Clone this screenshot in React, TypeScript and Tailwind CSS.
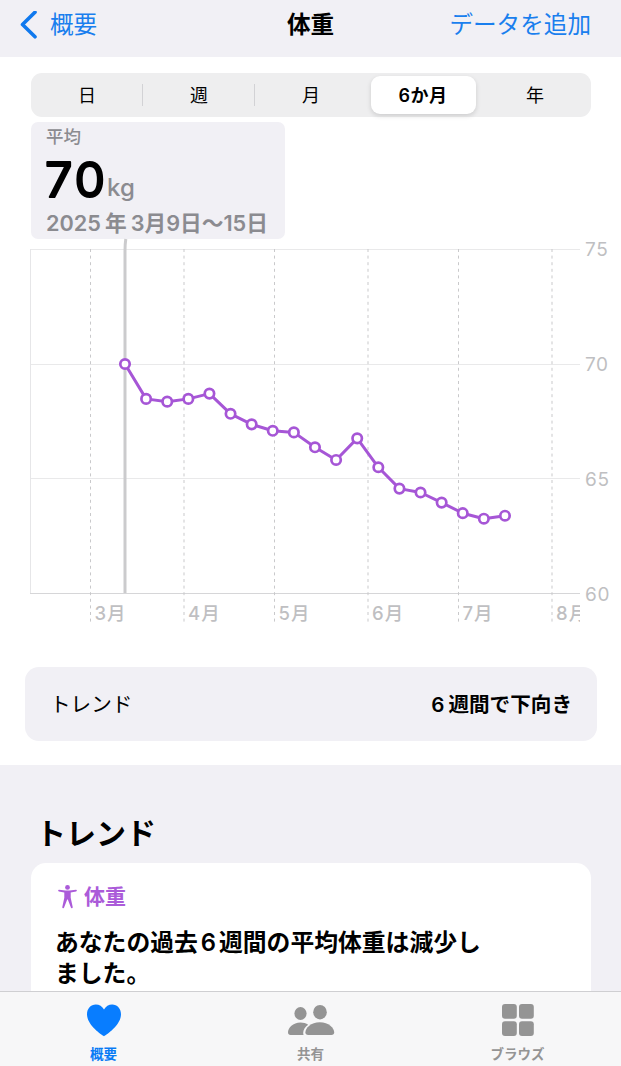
import { useState } from "react";

const PERIODS = ["日", "週", "月", "6か月", "年"];

const WEIGHTS = [
  70, 68.48, 68.36, 68.48, 68.71, 67.83, 67.37, 67.09, 67.02, 66.37, 65.82,
  66.76, 65.5, 64.57, 64.4, 63.96, 63.5, 63.26, 63.39,
];

const MONTHS = [
  { label: "3", x: 90.5 },
  { label: "4", x: 184 },
  { label: "5", x: 274.5 },
  { label: "6", x: 368 },
  { label: "7", x: 458.5 },
  { label: "8", x: 552 },
];

const toX = (i: number) => 125 + i * 21.11;
const toY = (kg: number) => 354.5 - (kg - 60) * 22.95;

function Header() {
  return (
    <header className="grid h-[57px] shrink-0 grid-cols-3 items-center bg-[#f1f0f5] pb-[7px] pl-5 pr-[30px] text-[23.6px]">
      <button className="flex items-center gap-[13px] text-[#1a7fee]">
        <svg width="17" height="28" viewBox="0 0 17 28" fill="none">
          <path
            d="M15 1.2 2.5 13.5 15 25.8"
            stroke="#1079ee"
            strokeWidth="3.6"
            strokeLinecap="round"
            strokeLinejoin="round"
          />
        </svg>
        <span>概要</span>
      </button>
      <h1 className="pl-2.5 text-center font-bold">体重</h1>
      <button className="whitespace-nowrap text-right text-[#1a7fee]">データを追加</button>
    </header>
  );
}

function PeriodTabs() {
  const [selected, setSelected] = useState(3);

  return (
    <div className="ml-[31px] mr-[30px] mt-4 flex h-[44px] items-center rounded-[11px] bg-[#eeeeef]">
      {PERIODS.map((period, i) => (
        <button
          key={period}
          onClick={() => setSelected(i)}
          className={`flex h-full flex-1 items-center justify-center ${
            i < 2 ? "bg-[linear-gradient(#d2d2d5,#d2d2d5)] bg-[length:1px_22px] bg-right bg-no-repeat" : ""
          }`}
        >
          <span
            className={`flex h-[38px] w-[105px] items-center justify-center rounded-[9px] pt-px text-[18px] ${
              i === selected
                ? "bg-white font-semibold tracking-[0.5px] shadow-[0_2px_5px_rgba(0,0,0,0.14)]"
                : ""
            }`}
          >
            {period}
          </span>
        </button>
      ))}
    </div>
  );
}

function AverageCard() {
  return (
    <div className="ml-[31px] mt-[5px] flex h-[117px] w-[254px] flex-col rounded-[7px] bg-[#f1f0f5] pl-[15px] text-[#8b8b90]">
      <p className="mt-[3px] text-[17.5px] font-medium leading-6">平均</p>
      <div className="flex h-[58px] items-end">
        <svg width="60" height="58" viewBox="0 0 60 58" className="overflow-visible">
          <text
            x="-1"
            y="48.3"
            textLength="60"
            fontSize="48.5"
            fontWeight="400"
            stroke="#000"
            strokeWidth="2"
            strokeLinejoin="round"
          >
            70
          </text>
        </svg>
        <span className="pb-[4px] pl-px text-[24px] font-medium leading-[30px]">kg</span>
      </div>
      <p className="whitespace-nowrap text-[21.7px] font-semibold leading-8">
        2025<span className="mx-1">年</span>3月9日〜15日
      </p>
    </div>
  );
}

function WeightChart() {
  const points = WEIGHTS.map((kg, i) => `${toX(i)},${toY(kg)}`).join(" ");

  return (
    <svg width="621" height="386" viewBox="0 0 621 386" className="block overflow-visible">
      <clipPath id="plot">
        <rect width="580" height="386" />
      </clipPath>
      {[75, 70, 65, 60].map((kg) => (
        <g key={kg}>
          <path
            d={`M30 ${Math.floor(toY(kg)) + 0.5}H580`}
            stroke={kg === 60 ? "#d6d6d8" : "#e9e9ea"}
          />
          <text x="585" y={toY(kg) + 7} fontSize="19" fill="#bfbfc2" letterSpacing="0.6">
            {kg}
          </text>
        </g>
      ))}
      <path d="M30.5 10V354" stroke="#e6e6e8" />
      <g clipPath="url(#plot)">
        {MONTHS.map((m) => (
          <g key={m.label}>
            <path d={`M${m.x} 10V385`} stroke="#c9c9cb" strokeDasharray="3 3.6" />
            <text x={m.x + 4} y="380.7" fontSize="18.5" fill="#bfbfc2" fontWeight="500">
              {m.label}
              <tspan dx="1">月</tspan>
            </text>
          </g>
        ))}
      </g>
      <path d="M125.8 0Q125 5 125 12V354" fill="none" stroke="#cbcbcd" strokeWidth="3" />
      <polyline points={points} fill="none" stroke="#a656d6" strokeWidth="3" strokeLinejoin="round" />
      {WEIGHTS.map((kg, i) => (
        <circle key={i} cx={toX(i)} cy={toY(kg)} r="4.7" fill="#fff" stroke="#a656d6" strokeWidth="2.7" />
      ))}
    </svg>
  );
}

function TrendSection() {
  return (
    <section className="min-h-0 flex-1 overflow-hidden bg-[#f1f0f5] px-[31px] pt-[47px]">
      <h2 className="pl-[5px] text-[30px] font-bold leading-[42px]">トレンド</h2>
      <div className="mt-[9px] h-60 w-[560px] rounded-[15px] bg-white px-[24px] pt-[19px]">
        <div className="flex h-[30px] items-center gap-[7px] pl-[3px] text-[21px] font-bold text-[#ab5bd9]">
          <svg width="19" height="24" viewBox="0 0 19 24" fill="#ab5bd9">
            <circle cx="9.5" cy="2.4" r="2.4" />
            <path d="M1 4.8 7.5 5.5h4L18 4.8a.8.8 0 0 1 .1 1.6L12.7 7.5v5.2l2 9.3a.9.9 0 0 1-1.8.5L9.8 14.5h-.6l-3.1 8a.9.9 0 0 1-1.8-.5l2-9.3V7.5L.9 6.4A.8.8 0 0 1 1 4.8Z" />
          </svg>
          体重
        </div>
        <p className="mt-4 text-[23.8px] font-semibold leading-[30.5px]">
          あなたの過去<span className="mx-[3px]">6</span>週間の平均体重は減少し
          <br />
          ました。
        </p>
      </div>
    </section>
  );
}

function TabBar() {
  return (
    <nav className="grid h-[75px] shrink-0 grid-cols-3 border-t border-[#cfcfd2] bg-[#f7f7f8] text-[13.5px] font-bold text-[#949494]">
      <button className="flex flex-col items-center text-[#087bf5]">
        <svg width="36" height="52" viewBox="0 0 36 52" fill="#087dff">
          <path d="M18 44.3C14.8 42.2 1 32.9 1 22.3 1 16.6 4.9 12.5 9.8 12.5c3.5 0 6.5 1.8 8.2 5.1 1.7-3.3 4.7-5.1 8.2-5.1 4.9 0 8.8 4.1 8.8 9.8 0 10.6-13.8 19.9-17 22Z" />
        </svg>
        <span className="leading-5">概要</span>
      </button>
      <button className="flex flex-col items-center">
        <svg width="48" height="52" viewBox="0 0 48 52" fill="#949494">
          <ellipse cx="13.5" cy="21.5" rx="6.1" ry="6.5" />
          <path d="M3.5 43C2 43 1 42 1 40.3 1 36 6 30.5 13.5 30.5c3 0 5.6.8 7.7 2.2-3.2 2.4-5 5.2-5 8.2 0 .8.1 1.4.4 2.1Z" />
          <ellipse cx="33" cy="20.2" rx="6.8" ry="7.2" />
          <path d="M21.2 43c-1.8 0-2.8-.9-2.8-2.5 0-4.5 5.5-10.2 14.4-10.2s14.4 5.7 14.4 10.2c0 1.6-1 2.5-2.8 2.5Z" />
        </svg>
        <span className="leading-5">共有</span>
      </button>
      <button className="flex flex-col items-center">
        <svg width="32" height="52" viewBox="0 0 32 52" fill="#949494">
          <rect y="12" width="14.8" height="14.8" rx="3" />
          <rect x="17" y="12" width="14.8" height="14.8" rx="3" />
          <rect y="29.2" width="14.8" height="14.8" rx="3" />
          <rect x="17" y="29.2" width="14.8" height="14.8" rx="3" />
        </svg>
        <span className="leading-5">ブラウズ</span>
      </button>
    </nav>
  );
}

export default function App() {
  return (
    <div className="flex h-[1066px] w-[621px] flex-col overflow-hidden bg-white font-['Inter','Noto_Sans_CJK_JP',sans-serif] text-black">
      <Header />
      <main className="flex min-h-0 flex-1 flex-col">
        <div className="h-[708px] shrink-0">
          <PeriodTabs />
          <AverageCard />
          <WeightChart />
          <div className="ml-[25px] mr-6 mt-[42px] flex h-[74px] items-center justify-between rounded-[14px] bg-[#f1f0f5] px-[25px] pt-0.5 text-[20.6px]">
            <span>トレンド</span>
            <span className="font-semibold">
              6<span className="ml-1">週間で下向き</span>
            </span>
          </div>
        </div>
        <TrendSection />
      </main>
      <TabBar />
    </div>
  );
}
